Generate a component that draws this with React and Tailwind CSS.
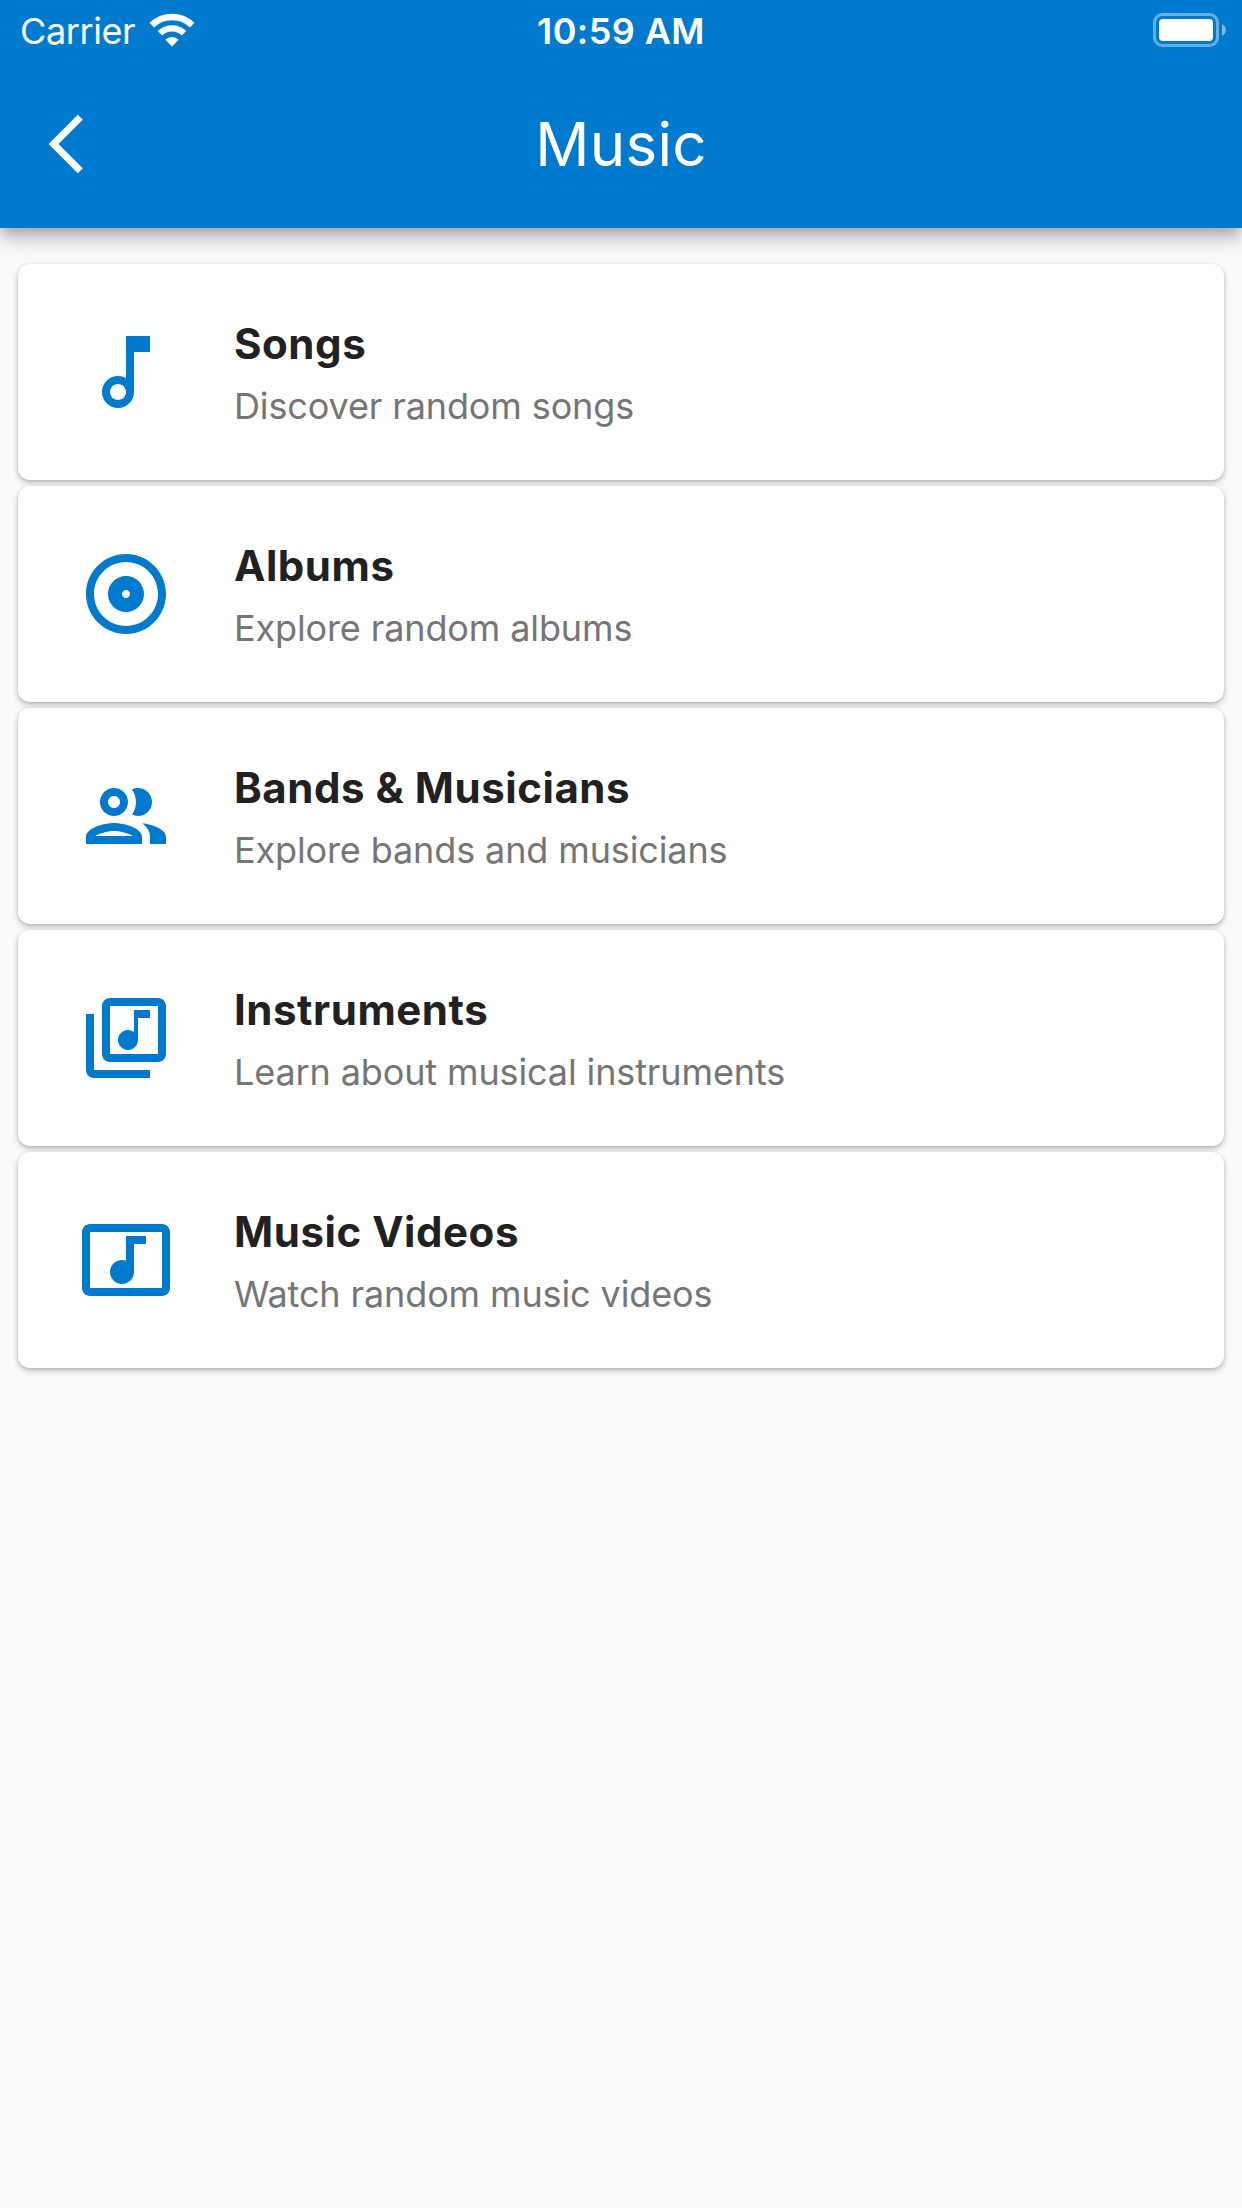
import React from 'react';

const ICONS = {
    note: 'M12 3l.01 10.55c-.59-.34-1.27-.55-2.02-.55C7.78 13 6 14.79 6 17s1.78 4 3.99 4 4.01-1.79 4.01-4V7h4V3h-6zm-1.99 16c-1.1 0-2-.9-2-2s.9-2 2-2 2 .9 2 2-.9 2-2 2z',
    album: 'M12 2C6.48 2 2 6.48 2 12s4.48 10 10 10 10-4.48 10-10S17.52 2 12 2zm0 18c-4.41 0-8-3.59-8-8s3.59-8 8-8 8 3.59 8 8-3.59 8-8 8zm0-12.5c-2.49 0-4.5 2.01-4.5 4.5s2.01 4.5 4.5 4.5 4.5-2.01 4.5-4.5-2.01-4.5-4.5-4.5zm0 5.5c-.55 0-1-.45-1-1s.45-1 1-1 1 .45 1 1-.45 1-1 1z',
    people: 'M9 13.75c-2.34 0-7 1.17-7 3.5V19h14v-1.75c0-2.33-4.66-3.5-7-3.5zM4.34 17c.84-.58 2.87-1.25 4.66-1.25s3.82.67 4.66 1.25H4.34zM9 12c1.93 0 3.5-1.57 3.5-3.5S10.93 5 9 5 5.5 6.57 5.5 8.5 7.07 12 9 12zm0-5c.83 0 1.5.67 1.5 1.5S9.83 10 9 10s-1.5-.67-1.5-1.5S8.17 7 9 7zm7.04 6.81c1.16.84 1.96 1.96 1.96 3.44V19h4v-1.75c0-2.02-3.5-3.17-5.96-3.44zM15 12c1.93 0 3.5-1.57 3.5-3.5S16.93 5 15 5c-.54 0-1.04.13-1.5.35.63.89 1 1.98 1 3.15s-.37 2.26-1 3.15c.46.22.96.35 1.5.35z',
    library: 'M20 2H8c-1.1 0-2 .9-2 2v12c0 1.1.9 2 2 2h12c1.1 0 2-.9 2-2V4c0-1.1-.9-2-2-2zm0 14H8V4h12v12zm-7.5-1c1.38 0 2.5-1.12 2.5-2.5V7h3V5h-4v5.51c-.42-.32-.93-.51-1.5-.51-1.38 0-2.5 1.12-2.5 2.5s1.12 2.5 2.5 2.5zM4 6H2v14c0 1.1.9 2 2 2h14v-2H4V6z',
    video: 'M21 3H3c-1.1 0-2 .9-2 2v14c0 1.1.9 2 2 2h18c1.1 0 2-.9 2-2V5c0-1.1-.9-2-2-2zm0 16H3V5h18v14zM8 15c0-1.66 1.34-3 3-3 .35 0 .69.07 1 .18V6h5v2h-3v7.03c-.02 1.64-1.35 2.97-3 2.97-1.66 0-3-1.34-3-3z',
};

const ITEMS = [
    { icon: 'note', title: 'Songs', subtitle: 'Discover random songs' },
    { icon: 'album', title: 'Albums', subtitle: 'Explore random albums' },
    { icon: 'people', title: 'Bands & Musicians', subtitle: 'Explore bands and musicians' },
    { icon: 'library', title: 'Instruments', subtitle: 'Learn about musical instruments' },
    { icon: 'video', title: 'Music Videos', subtitle: 'Watch random music videos' },
];

const StatusBar = () => (
    <div className="grid h-[60px] grid-cols-3 items-center pt-[2px] text-4xl leading-none">
        <div className="flex items-center pl-[20px]">
            <span className="tracking-[-0.4px]">Carrier</span>
            <svg className="-mt-0.5 ml-[14px] h-[34px] w-[46px]" viewBox="0 0 46 34" fill="none">
                <path d="M2.8 12.2a29 29 0 0 1 40.4 0" stroke="#fff" strokeWidth="6.6" />
                <path d="M11 20.3a17.2 17.2 0 0 1 24 0" stroke="#fff" strokeWidth="6.4" />
                <path d="M23 33.5l-6.7-6.8a9.7 9.7 0 0 1 13.4 0z" fill="#fff" />
            </svg>
        </div>
        <span className="text-center font-semibold tracking-[0.4px]">10:59 AM</span>
        <div className="flex items-center justify-end pr-4">
            <svg className="-mt-0.5 h-[34px] w-[73px]" viewBox="0 0 73 34">
                <rect x="1.5" y="1.5" width="63" height="31" rx="8" fill="none" stroke="#fff" strokeOpacity=".4" strokeWidth="3" />
                <rect x="6" y="6" width="54" height="22" rx="4" fill="#fff" />
                <path d="M69 11c5 2.5 5 9.5 0 12z" fill="#fff" fillOpacity=".5" />
            </svg>
        </div>
    </div>
);

const Card = ({ icon, title, subtitle }) => (
    <div className="flex h-[216px] items-center rounded-xl bg-white pl-[60px] shadow-[0_3px_6px_rgba(0,0,0,0.22),0_1px_3px_rgba(0,0,0,0.12)]">
        <svg className="size-24 shrink-0" viewBox="0 0 24 24" fill="#007ace">
            <path d={ICONS[icon]} />
        </svg>
        <div className="ml-[60px] pt-1.5">
            <h2 className="text-[42px] leading-[62px] font-bold tracking-[0.55px] text-[#212121]">{title}</h2>
            <p className="text-4xl leading-[62px] tracking-[-0.12px] text-[#757575]">{subtitle}</p>
        </div>
    </div>
);

const App = () => {
    return (
        <div className="min-h-[2208px] w-[1242px] overflow-hidden bg-[#fafafa] font-['Inter',sans-serif]">
            {/* APP BAR */}
            <header className="h-[228px] bg-[#007ace] text-white shadow-[0_6px_12px_-3px_rgba(0,0,0,0.2),0_12px_15px_rgba(0,0,0,0.14),0_3px_30px_rgba(0,0,0,0.12)]">
                <StatusBar />
                <div className="grid h-[168px] grid-cols-3 items-center">
                    <button className="ml-12 w-9" aria-label="Back">
                        <svg className="h-[60px] w-9" viewBox="0 0 36 60" fill="none">
                            <path d="M32.3 3.2L5.5 30l26.8 26.8" stroke="#fff" strokeWidth="7" />
                        </svg>
                    </button>
                    <h1 className="text-center text-6xl tracking-[0.3px]">Music</h1>
                </div>
            </header>

            {/* CATEGORY LIST */}
            <main className="flex flex-col gap-1.5 px-[18px] pt-9">
                {ITEMS.map((item) => (
                    <Card key={item.title} {...item} />
                ))}
            </main>
        </div>
    );
};

export default App;
